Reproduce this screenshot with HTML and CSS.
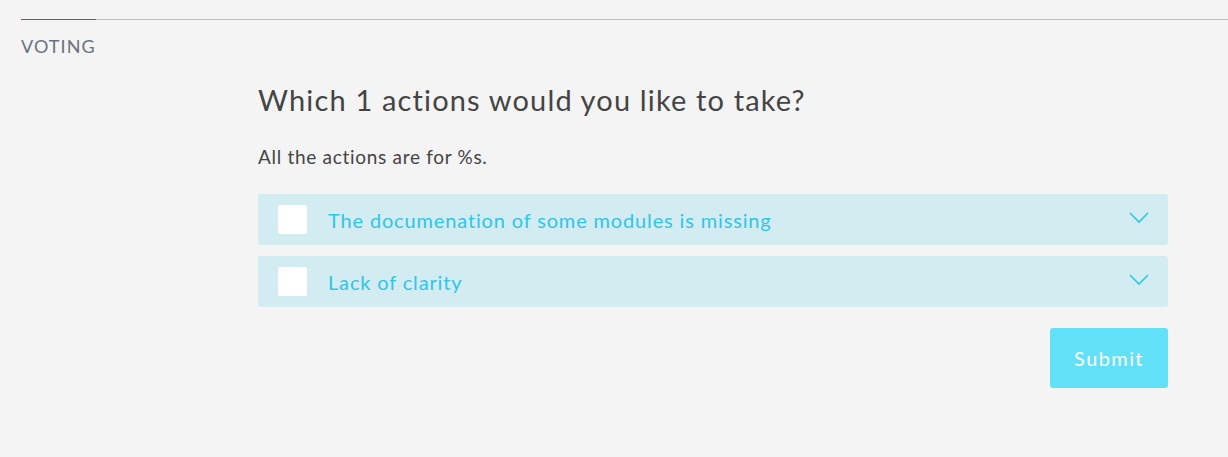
FILE: index.html
```html
<!DOCTYPE html>
<html lang="en">
<head>
	<meta charset="UTF-8">
	<meta name="viewport" content="width=device-width, initial-scale=1.0">
	<title>Voting</title>
	<link rel="stylesheet" href="styles.css">
</head>
<body>

	<header class="tab-bar">
		<div class="tab-line"><span class="tab-line-active"></span></div>
		<div class="tab-title">VOTING</div>
	</header>

	<main class="vote">
		<h1 class="vote-question">Which 1 actions would you like to take?</h1>
		<p class="vote-note">All the actions are for %s.</p>

		<ul class="vote-list">
			<li class="vote-item">
				<span class="vote-check"></span>
				<span class="vote-label">The documenation of some modules is missing</span>
				<svg class="vote-chevron" viewBox="0 0 20 12" width="20" height="12"><path d="M1 1 L10 10 L19 1" fill="none" stroke="currentColor" stroke-width="1.6"/></svg>
			</li>
			<li class="vote-item">
				<span class="vote-check"></span>
				<span class="vote-label">Lack of clarity</span>
				<svg class="vote-chevron" viewBox="0 0 20 12" width="20" height="12"><path d="M1 1 L10 10 L19 1" fill="none" stroke="currentColor" stroke-width="1.6"/></svg>
			</li>
		</ul>

		<div class="vote-actions">
			<button class="vote-submit">Submit</button>
		</div>
	</main>

</body>
</html>
```

FILE: styles.css
```css
* {
	margin: 0;
	padding: 0;
	box-sizing: border-box;
}

body {
	background-color: #f4f4f4;
	font-family: "Lato", "Open Sans", sans-serif;
	color: #444;
}

.tab-bar {
	padding: 19px 0 0 21px;
}

.tab-line {
	height: 1px;
	background-color: #bdb7dc;
}

.tab-line-active {
	display: block;
	width: 75px;
	height: 1px;
	background-color: #5a6470;
}

.tab-title {
	margin-top: 16px;
	font-size: 18px;
	line-height: 20px;
	color: #6a7280;
	letter-spacing: 1.1px;
}

.vote {
	margin: 26px 60px 0 258px;
}

.vote-question {
	font-size: 29px;
	font-weight: 400;
	line-height: 36px;
	letter-spacing: 1.15px;
	color: #444;
}

.vote-note {
	margin-top: 28px;
	font-size: 19px;
	line-height: 22px;
	letter-spacing: .7px;
	color: #444;
}

.vote-list {
	list-style: none;
	margin-top: 26px;
	display: flex;
	flex-direction: column;
	gap: 11px;
}

.vote-item {
	display: flex;
	align-items: center;
	height: 51px;
	padding: 0 19px 0 20px;
	background-color: #d2ecf2;
	border-radius: 3px;
}

.vote-check {
	width: 29px;
	height: 29px;
	background-color: #fff;
	border-radius: 2px;
}

.vote-label {
	flex: 1;
	margin-left: 21px;
	font-size: 20px;
	letter-spacing: .85px;
	color: #2ec6e8;
}

.vote-chevron {
	color: #2ec6e8;
	margin-bottom: 3px;
}

.vote-actions {
	display: flex;
	justify-content: flex-end;
	margin-top: 21px;
}

.vote-submit {
	width: 118px;
	height: 60px;
	border: none;
	border-radius: 3px;
	background-color: #62e0f8;
	color: #fff;
	font-family: inherit;
	font-size: 20px;
	letter-spacing: 1.4px;
}
```
